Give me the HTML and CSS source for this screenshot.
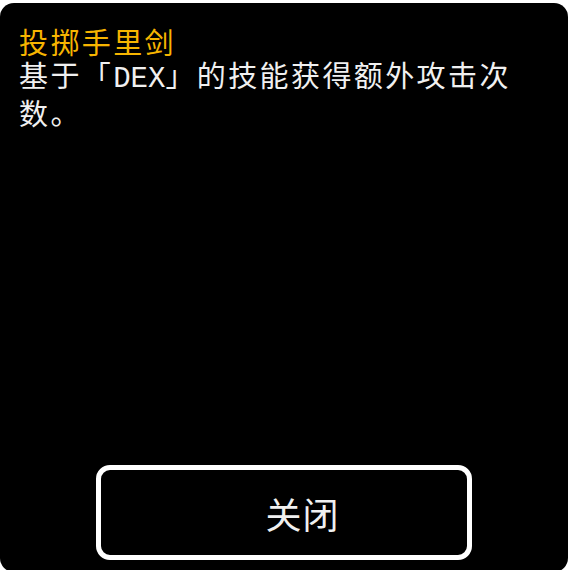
FILE: index.html
```html
<!DOCTYPE html>
<html lang="zh-CN">
<head>
<meta charset="utf-8">
<title>投掷手里剑</title>
<link rel="stylesheet" href="styles.css">
</head>
<body>
  <div class="dialog">
    <div class="skill">
      <div class="skill-name">投掷手里剑</div>
      <div class="skill-desc">基于「<span class="stat">DEX</span>」的技能获得额外攻击次数。</div>
    </div>
    <button class="close-btn" type="button">关闭</button>
  </div>
</body>
</html>
```

FILE: styles.css
```css
html, body {
  margin: 0;
  padding: 0;
  background: #ffffff;
  overflow: hidden;
}

.dialog {
  box-sizing: border-box;
  margin-top: 3px;
  width: 568px;
  height: 569px;
  background: #000000;
  border-radius: 14px;
  padding: 22px 20px 12px 19px;
  display: flex;
  flex-direction: column;
}

.skill {
  font-family: "Noto Sans CJK SC", sans-serif;
  font-size: 29px;
  line-height: 33px;
  letter-spacing: 2.4px;
}

.skill-name {
  color: #f7b500;
}

.skill-desc {
  color: #f0f0f0;
}

.stat {
  font-family: "Liberation Mono", "DejaVu Sans Mono", monospace;
  letter-spacing: 0;
}

.close-btn {
  margin: auto auto 0;
  box-sizing: border-box;
  width: 376px;
  height: 95px;
  background: #000000;
  border: 5px solid #ffffff;
  border-radius: 14px;
  color: #f0f0f0;
  font-family: "Noto Sans CJK SC", sans-serif;
  font-size: 36px;
  padding: 0 0 0 38px;
  letter-spacing: 1px;
}
```
